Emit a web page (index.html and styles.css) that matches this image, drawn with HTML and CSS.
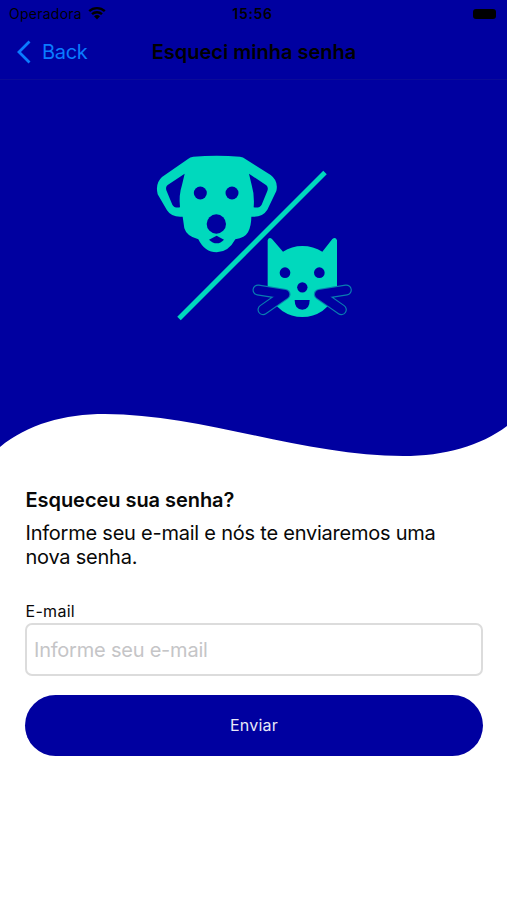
FILE: index.html
```html
<!DOCTYPE html>
<html lang="pt-BR">
<head>
<meta charset="utf-8">
<meta name="viewport" content="width=device-width, initial-scale=1">
<title>Esqueci minha senha</title>
<link rel="stylesheet" href="styles.css">
</head>
<body>
<header class="header">
  <div class="status">
    <div class="carrier"><span>Operadora</span>
      <svg class="wifi" viewBox="0 0 18 14" width="18" height="14"><path d="M1.2 5.2a11.3 11.3 0 0 1 15.6 0M4 8.2a7.3 7.3 0 0 1 10 0" fill="none" stroke="#000" stroke-width="2.4"/><path d="M6 10.3a4.4 4.4 0 0 1 6 0L9 13.4z"/></svg>
    </div>
    <span class="time">15:56</span>
    <span class="battery"></span>
  </div>
  <nav class="nav">
    <a class="back" href="#"><svg viewBox="0 0 14 24" width="14" height="24"><path d="M12.5 1.5 2 12l10.500 10.500" fill="none" stroke="currentColor" stroke-width="2.800"/></svg><span>Back</span></a>
    <h1 class="title">Esqueci minha senha</h1>
  </nav>
</header>
<svg class="hero" viewBox="0 80 507 390" width="507" height="390">
  <path class="navy" d="M0 80H507V426C480 446 445 456 403 456C305 456 200 414 105 414C64 414 28 424 0 447Z"/>
  <g transform="translate(150 145) scale(.33333)">
    <path class="mint" d="M114 42Q120 36 130 35Q200 29 270 35Q280 36 286 42L362 90Q386 108 379 138L352 194Q337 218 304 215Q304 242 294 262Q285 278 256 283Q235 322 200 322Q164 322 145 283Q110 274 103 250L98 215Q65 218 51 196L23 148Q15 115 36 96Z"/>
    <path class="navy" d="M104 86L53 120Q46 126 49 136L67 179Q73 190 90 187Q86 150 96 120Z"/>
    <path class="navy" d="M297 86L349 121Q356 127 352 138L335 179Q329 190 311 187Q314 150 305 120Z"/>
    <circle class="navy" cx="151" cy="144" r="19.500"/>
    <circle class="navy" cx="246" cy="144" r="19.500"/>
    <circle class="navy" cx="199" cy="237" r="29"/>
    <path class="navy" d="M177 284L200 272L222 284Q212 295 200 295Q188 295 177 284Z"/>
  </g>
  <path class="slash" d="M179 318.500 325 172.500"/>
  <g transform="translate(240 230) scale(.33333)">
    <path class="mint" d="M83 31Q87 20 96 27L129 65Q155 48 187 48Q220 48 247 65L277 27Q287 20 291 31V174Q285 215 247 243Q220 261 187 261Q154 261 127 243Q89 215 83 174Z"/>
    <circle class="navy" cx="135" cy="128" r="16"/>
    <circle class="navy" cx="238" cy="128" r="16"/>
    <circle class="navy" cx="187" cy="172" r="15.500"/>
    <path class="navy" d="M164 210H209Q209 239 187 239Q164 239 164 210Z"/>
    <path class="whisker-edge" d="M54 180 135 193 69 239M319 180 238 193 304 239"/>
    <path class="whisker" d="M54 180 135 193 69 239M319 180 238 193 304 239"/>
  </g>
</svg>
<main class="content">
  <h2 class="heading">Esqueceu sua senha?</h2>
  <p class="text">Informe seu e-mail e nós te enviaremos uma<br>nova senha.</p>
  <form>
    <label class="label" for="email">E-mail</label>
    <input class="input" id="email" type="email" placeholder="Informe seu e-mail">
    <button class="submit" type="button">Enviar</button>
  </form>
</main>
</body>
</html>
```

FILE: styles.css
```css
* { box-sizing: border-box; }
body {
  margin: 0;
  background: #fff;
  color: #080808;
  font-family: Inter, "Liberation Sans", sans-serif;
  height: 900px;
  overflow: hidden;
}
.header {
  height: 80px;
  background: #0000a0;
  color: #000;
  border-bottom: 1px solid #0b0b98;
}
.status {
  display: grid;
  grid-template-columns: 1fr auto 1fr;
  align-items: center;
  height: 27px;
  padding: 0 11px 0 9px;
  font-size: 14px;
}
.carrier { display: flex; align-items: center; gap: 6px; letter-spacing: 0.25px; }
.wifi { margin-top: -2px; }
.time { font-weight: 600; letter-spacing: 0.7px; }
.battery {
  justify-self: end;
  width: 23px;
  height: 10px;
  border-radius: 3px;
  background: #000;
}
.nav {
  display: grid;
  grid-template-columns: 1fr auto 1fr;
  align-items: center;
  height: 50px;
  padding: 0 16px 0 17px;
}
.back {
  display: flex;
  align-items: center;
  gap: 11px;
  color: #0a7cff;
  font-size: 20px;
  letter-spacing: -0.3px;
  text-decoration: none;
}
.title { margin: 0; font-size: 20px; font-weight: 600; white-space: nowrap; }
.hero { display: block; }
.navy { fill: #0000a0; }
.mint { fill: #00d9bd; }
.slash { stroke: #00d9bd; stroke-width: 5; fill: none; }
.whisker, .whisker-edge {
  fill: none;
  stroke-linecap: round;
  stroke-linejoin: round;
}
.whisker-edge { stroke: #087db0; stroke-width: 33; }
.whisker { stroke: #0000a0; stroke-width: 26; }
.content { padding: 18px 25px 0; }
.heading { margin: 0 0 0 0.5px; font-size: 20px; line-height: 25px; font-weight: 600; letter-spacing: -0.05px; }
.text { margin: 8px 0 0 0.5px; font-size: 20px; line-height: 24px; letter-spacing: -0.23px; white-space: nowrap; }
.label { display: block; margin: 32px 0 0 0.5px; font-size: 16px; line-height: 20px; letter-spacing: 0.3px; }
.input {
  display: block;
  width: 458px;
  height: 53px;
  margin-top: 2px;
  padding: 0 7px;
  border: 2px solid #dcdcdc;
  border-radius: 7px;
  background: #fff;
  font: 20px Inter, sans-serif;
  letter-spacing: -0.22px;
}
.input::placeholder { color: #c5c5c7; opacity: 1; }
.submit {
  display: block;
  width: 458px;
  height: 61px;
  margin-top: 19px;
  padding: 0 0 1px;
  border: 0;
  border-radius: 31px;
  background: #0000a0;
  color: #e8e8f8;
  font: 16px Inter, sans-serif;
  letter-spacing: 0.25px;
}
```
